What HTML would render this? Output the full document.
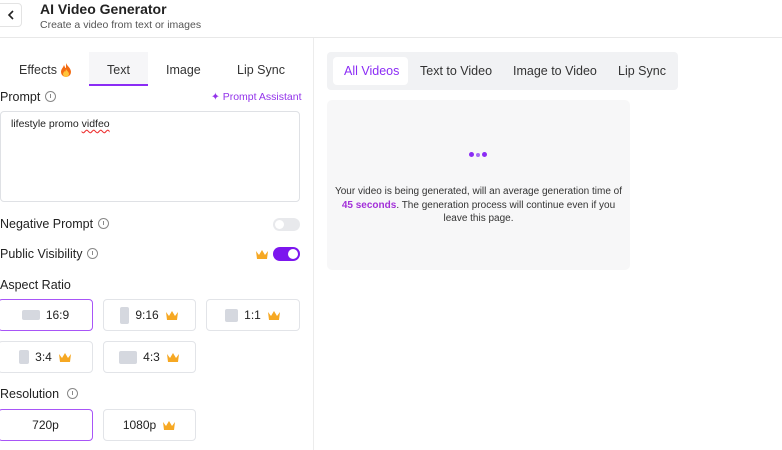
<!DOCTYPE html>
<html><head><meta charset="utf-8"><style>
*{box-sizing:border-box;margin:0;padding:0}
body{width:782px;height:450px;overflow:hidden;background:#fff;font-family:"Liberation Sans",sans-serif;color:#222;position:relative}
.a{position:absolute;white-space:nowrap}
.lbl{font-size:12.5px;color:#222}
.btn{position:absolute;border:1px solid #e2e4e8;border-radius:4px;height:32px;display:flex;align-items:center;justify-content:center;font-size:12px;color:#222;gap:6px}
.sel{border-color:#a855f7}
.sw{background:#d5d8df;border-radius:2px;display:inline-block}
.info{display:inline-block;width:11px;height:11px;border:1px solid #888;border-radius:50%;position:relative;vertical-align:-1px;margin-left:5px}
.info:after{content:"";position:absolute;left:4px;top:2px;width:1px;height:4px;background:#888}
.tab{font-size:12.5px;color:#333}
</style></head><body>
<div class="a" style="left:-4px;top:3px;width:26px;height:24px;border:1px solid #e3e3e3;border-radius:4px"></div>
<svg class="a" style="left:7px;top:10px" width="8" height="10" viewBox="0 0 8 10"><path d="M6 1 L2 5 L6 9" stroke="#222" stroke-width="1.6" fill="none"/></svg>
<div class="a" style="left:40px;top:1px;font-size:14px;font-weight:bold;color:#222">AI Video Generator</div>
<div class="a" style="left:40px;top:19px;font-size:10.5px;color:#555">Create a video from text or images</div>
<div class="a" style="left:0;top:37px;width:782px;height:1px;background:#e8e8e8"></div>
<div class="a" style="left:313px;top:38px;width:1px;height:412px;background:#ececec"></div>

<div class="a" style="left:89px;top:52px;width:59px;height:34px;background:#f6f6f8;border-bottom:2px solid #8b2cf5"></div>
<div class="a tab" style="left:19px;top:63px">Effects</div>
<svg class="a" style="left:60px;top:62px" width="12" height="15" viewBox="0 0 12 15"><path d="M6 1C7 4 11 6 11 10a5 5 0 0 1-10 0C1 7 3 6 4 3c1 2 1 3 2 3z" fill="#f36b12"/><path d="M6 7c1 2 3 3 3 5a3 3 0 0 1-6 0c0-1 1-2 1.5-3 .5 1 1 1 1.5-2z" fill="#ffc43b"/></svg>
<div class="a tab" style="left:107px;top:63px">Text</div>
<div class="a tab" style="left:166px;top:63px">Image</div>
<div class="a tab" style="left:237px;top:63px">Lip Sync</div>

<div class="a lbl" style="left:0;top:90px">Prompt<span class="info"></span></div>
<div class="a" style="left:211px;top:91px;font-size:10.5px;color:#9333ea">✦ Prompt Assistant</div>
<div class="a" style="left:0;top:111px;width:300px;height:91px;border:1px solid #dfe1e5;border-radius:4px"></div>
<div class="a" style="left:11px;top:118px;font-size:10.5px;color:#222">lifestyle promo <span style="text-decoration:underline wavy #e33;text-underline-offset:2px">vidfeo</span></div>

<div class="a lbl" style="left:0;top:217px">Negative Prompt<span class="info"></span></div>
<div class="a" style="left:273px;top:218px;width:27px;height:13px;border-radius:7px;background:#e8e9ec"><div style="position:absolute;left:2px;top:2px;width:9px;height:9px;border-radius:50%;background:#fff"></div></div>
<div class="a lbl" style="left:0;top:247px">Public Visibility<span class="info"></span></div>
<svg class="a" style="left:255px;top:249px" width="14" height="11" viewBox="0 0 14 11"><path d="M1 2 L4 6 L7 1 L10 6 L13 2 L12 10 H2z" fill="#f6a823"/></svg>
<div class="a" style="left:273px;top:247px;width:27px;height:14px;border-radius:7px;background:#7c16ee"><div style="position:absolute;right:2px;top:2px;width:10px;height:10px;border-radius:50%;background:#fff"></div></div>

<div class="a lbl" style="left:0;top:278px">Aspect Ratio</div>
<div class="btn sel" style="left:-2px;top:299px;width:95px"><span class="sw" style="width:18px;height:10px"></span>16:9</div>
<div class="btn" style="left:103px;top:299px;width:93px"><span class="sw" style="width:9px;height:17px"></span>9:16 <svg width="14" height="11" viewBox="0 0 14 11"><path d="M1 2 L4 6 L7 1 L10 6 L13 2 L12 10 H2z" fill="#f6a823"/></svg></div>
<div class="btn" style="left:206px;top:299px;width:94px"><span class="sw" style="width:13px;height:13px"></span>1:1 <svg width="14" height="11" viewBox="0 0 14 11"><path d="M1 2 L4 6 L7 1 L10 6 L13 2 L12 10 H2z" fill="#f6a823"/></svg></div>
<div class="btn" style="left:-2px;top:341px;width:95px"><span class="sw" style="width:10px;height:14px"></span>3:4 <svg width="14" height="11" viewBox="0 0 14 11"><path d="M1 2 L4 6 L7 1 L10 6 L13 2 L12 10 H2z" fill="#f6a823"/></svg></div>
<div class="btn" style="left:103px;top:341px;width:93px"><span class="sw" style="width:18px;height:13px"></span>4:3 <svg width="14" height="11" viewBox="0 0 14 11"><path d="M1 2 L4 6 L7 1 L10 6 L13 2 L12 10 H2z" fill="#f6a823"/></svg></div>

<div class="a lbl" style="left:0;top:387px">Resolution<span class="info" style="margin-left:8px"></span></div>
<div class="btn sel" style="left:-2px;top:409px;width:95px">720p</div>
<div class="btn" style="left:103px;top:409px;width:93px">1080p <svg width="14" height="11" viewBox="0 0 14 11"><path d="M1 2 L4 6 L7 1 L10 6 L13 2 L12 10 H2z" fill="#f6a823"/></svg></div>

<div class="a" style="left:327px;top:52px;width:351px;height:38px;background:#f1f2f4;border-radius:4px"></div>
<div class="a" style="left:333px;top:57px;width:75px;height:28px;background:#fff;border-radius:4px"></div>
<div class="a tab" style="left:344px;top:64px;color:#8b2cf5">All Videos</div>
<div class="a tab" style="left:420px;top:64px">Text to Video</div>
<div class="a tab" style="left:513px;top:64px">Image to Video</div>
<div class="a tab" style="left:618px;top:64px">Lip Sync</div>

<div class="a" style="left:327px;top:100px;width:303px;height:170px;background:#f7f7f8;border-radius:5px"></div>
<div class="a" style="left:469px;top:152px;width:5px;height:5px;border-radius:50%;background:#8b2cf5"></div>
<div class="a" style="left:476px;top:153px;width:4px;height:4px;border-radius:50%;background:#a66cf5"></div>
<div class="a" style="left:482px;top:152px;width:5px;height:5px;border-radius:50%;background:#8b2cf5"></div>
<div class="a" style="left:327px;top:185px;width:303px;text-align:center;font-size:10px;line-height:13.5px;color:#333;white-space:normal">Your video is being generated, will an average generation time of<br><b style="color:#a330d9">45 seconds</b>. The generation process will continue even if you<br>leave this page.</div>
</body></html>
